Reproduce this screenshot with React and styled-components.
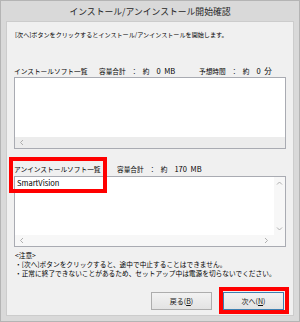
import React from 'react'
import styled, { createGlobalStyle } from 'styled-components'

const GlobalStyle = createGlobalStyle`
  html, body {
    margin: 0;
    padding: 0;
    background: #d9d9d9;
  }
  body {
    font-family: 'Noto Sans CJK JP', 'Noto Sans', sans-serif;
    color: #000;
  }
`

const Window = styled.div`
  position: relative;
  width: 300px;
  height: 322px;
  box-sizing: border-box;
  background: #d9d9d9;
  border: 1px solid #b4b4b4;
  display: flex;
  flex-direction: column;
`

const TitleBar = styled.div`
  height: 20px;
  display: flex;
  align-items: center;
  justify-content: center;
  font-size: 8.8px;
  color: #262626;
  padding-top: 1px;
  box-sizing: border-box;
`

const Panel = styled.div`
  margin: 0 5px 5px 5px;
  flex: 1;
  background: #f0f0f0;
  border: 1px solid #cccccc;
  box-sizing: border-box;
  padding: 0 7px 0 7px;
  display: flex;
  flex-direction: column;
`

const Text = styled.div`
  font-size: ${(p) => p.size || 6.6}px;
  line-height: 10px;
  height: 10px;
  white-space: nowrap;
  margin-top: ${(p) => p.mt || 0}px;
  padding-left: ${(p) => p.indent || 0}px;
`

const LabelRow = styled.div`
  display: flex;
  align-items: center;
  height: 10px;
  margin-top: ${(p) => p.mt}px;
  font-size: 6.7px;
  line-height: 10px;
  white-space: nowrap;
`

const Label = styled.span`
  width: ${(p) => p.w}px;
  flex: none;
`

const Stat = styled.span`
  width: ${(p) => (p.w ? `${p.w}px` : 'auto')};
  flex: none;
  display: flex;
  align-items: center;
`

const Colon = styled.span`
  width: 17px;
  text-align: center;
`

const Value = styled.span`
  margin-left: 7px;
  font-size: 7.5px;
  word-spacing: 2px;
`

const ListBox = styled.div`
  margin-top: ${(p) => p.mt}px;
  height: ${(p) => p.h}px;
  background: #fff;
  border: 1px solid #a9abb2;
  box-sizing: border-box;
  display: grid;
  grid-template-columns: 1fr ${(p) => (p.vscroll ? '11px' : '0')};
  grid-template-rows: 1fr 11px;
`

const ListItems = styled.div`
  padding: 1px 2px;
  font-size: 7.5px;
  line-height: 9px;
`

const VScroll = styled.div`
  background: #f7f7f7;
  display: flex;
  flex-direction: column;
  justify-content: space-between;
  align-items: center;
  padding: 3px 0;
`

const HScroll = styled.div`
  grid-column: 1 / -1;
  background: ${(p) => p.bg};
  display: flex;
  align-items: center;
  justify-content: space-between;
  padding: 0 ${(p) => (p.vscroll ? 15 : 4)}px 0 4px;
`

const Notes = styled.div`
  margin-top: 4px;
  font-size: 6.7px;
  line-height: 9px;
  white-space: nowrap;
  padding-left: 1px;
`

const ButtonRow = styled.div`
  margin-top: auto;
  margin-bottom: 5px;
  display: flex;
  justify-content: flex-end;
  gap: 11px;
  padding-right: 2px;
`

const Button = styled.div`
  width: 61px;
  height: 18px;
  box-sizing: border-box;
  border: 1px solid ${(p) => (p.primary ? '#3c7fb1' : '#adadad')};
  background: linear-gradient(#f2f2f2, #e3e3e3);
  font-size: 7px;
  display: flex;
  align-items: center;
  justify-content: center;
  color: #111;

  u {
    text-decoration: underline;
  }
`

const Highlight = styled.div`
  position: absolute;
  left: ${(p) => p.x}px;
  top: ${(p) => p.y}px;
  width: ${(p) => p.w}px;
  height: ${(p) => p.h}px;
  box-sizing: border-box;
  border: 4px solid #ff0000;
  pointer-events: none;
`

const Chevron = ({ dir, color = '#a6a6a6' }) => {
  const paths = {
    left: 'M4 1 L1.5 3.5 L4 6',
    right: 'M2 1 L4.5 3.5 L2 6',
    up: 'M1 4.5 L3.5 2 L6 4.5',
    down: 'M1 2.5 L3.5 5 L6 2.5',
  }
  return (
    <svg width="7" height="7" viewBox="0 0 7 7">
      <path d={paths[dir]} fill="none" stroke={color} strokeWidth="0.9" />
    </svg>
  )
}

const StatText = ({ name, value, w }) => (
  <Stat w={w}>
    {name}
    <Colon>：</Colon>約<Value>{value}</Value>
  </Stat>
)

const App = () => (
  <>
    <GlobalStyle />
    <Window>
      <TitleBar>インストール/アンインストール開始確認</TitleBar>
      <Panel>
        <Text size={6.1} mt={8} indent={1}>
          [次へ]ボタンをクリックするとインストール/アンインストールを開始します。
        </Text>

        <LabelRow mt={26}>
          <Label w={85}>インストールソフト一覧</Label>
          <StatText name="容量合計" value="0 MB" w={100} />
          <StatText name="予想時間" value="0 分" />
        </LabelRow>
        <ListBox mt={1} h={72}>
          <ListItems />
          <div />
          <HScroll bg="#ececec">
            <Chevron dir="left" />
          </HScroll>
        </ListBox>

        <LabelRow mt={15}>
          <Label w={103}>アンインストールソフト一覧</Label>
          <StatText name="容量合計" value="170 MB" />
        </LabelRow>
        <ListBox mt={2} h={71} vscroll>
          <ListItems>SmartVision</ListItems>
          <VScroll>
            <Chevron dir="up" />
            <Chevron dir="down" />
          </VScroll>
          <HScroll bg="#f7f7f7" vscroll>
            <Chevron dir="left" />
            <Chevron dir="right" />
          </HScroll>
        </ListBox>

        <Notes>
          <div>&lt;注意&gt;</div>
          <div>・[次へ]ボタンをクリックすると、途中で中止することはできません。</div>
          <div>・正常に終了できないことがあるため、セットアップ中は電源を切らないでください。</div>
        </Notes>

        <ButtonRow>
          <Button>
            戻る(<u>B</u>)
          </Button>
          <Button primary>
            次へ(<u>N</u>)
          </Button>
        </ButtonRow>
      </Panel>

      <Highlight x={8} y={156} w={98} h={36} />
      <Highlight x={218} y={286} w={70} h={27} />
    </Window>
  </>
)

export default App
